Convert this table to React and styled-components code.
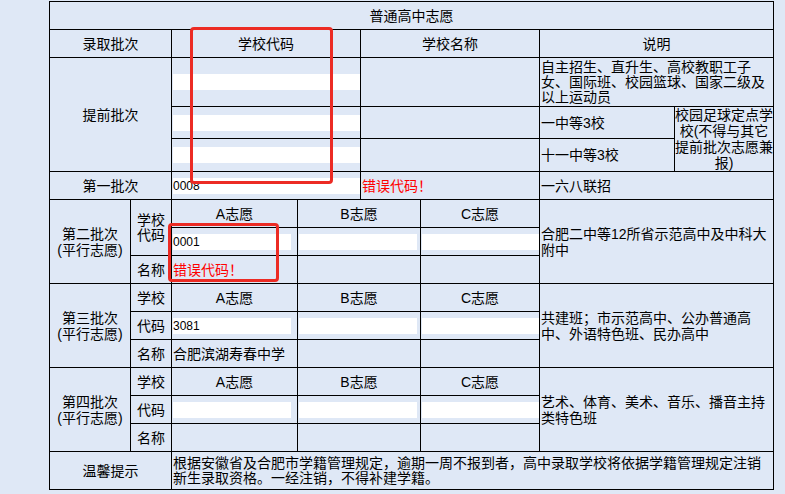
import React from 'react';
import styled, { createGlobalStyle } from 'styled-components';

const GlobalStyle = createGlobalStyle`
  html, body { margin: 0; padding: 0; background: #dfe8f6; }
  body {
    font-family: "Liberation Sans", "Noto Sans CJK SC", sans-serif;
    font-size: 14px;
    color: #000;
  }
`;

const Page = styled.div`
  padding: 1px 0 0 49px;
`;

const Board = styled.div`
  position: relative;
  width: 725px;
`;

const Grid = styled.div`
  display: grid;
  grid-template-columns: 80px 40px 125px 62px 59px 118px 134px 98px;
  grid-template-rows: 27px 27px 48px 31px 32px 27px repeat(9, 27px) 37px;
  gap: 1px;
  padding: 1px;
  background: #000;
  box-sizing: border-box;
  width: 725px;
`;

const Cell = styled.div`
  grid-column: ${(p) => p.$c};
  grid-row: ${(p) => p.$r};
  background: #dfe8f6;
  display: flex;
  align-items: center;
  justify-content: ${(p) => (p.$left ? 'flex-start' : 'center')};
  text-align: ${(p) => (p.$left ? 'left' : 'center')};
  padding-left: ${(p) => (p.$left ? '1px' : '0')};
  line-height: ${(p) => p.$lh || 16}px;
  color: ${(p) => (p.$error ? '#f00' : '#000')};
  min-width: 0;
  overflow: hidden;
`;

const Text = styled.span`
  display: block;
  white-space: nowrap;
`;

const Field = styled.input`
  display: block;
  width: ${(p) => p.$w || '100%'};
  height: 16px;
  margin: 0;
  padding: 0;
  border: 0;
  outline: none;
  background: #fff;
  font-family: "Liberation Sans", sans-serif;
  font-size: 12px;
  color: #000;
  box-sizing: border-box;
`;

const Highlight = styled.div`
  position: absolute;
  left: ${(p) => p.$x}px;
  top: ${(p) => p.$y}px;
  width: ${(p) => p.$w}px;
  height: ${(p) => p.$h}px;
  border: 3px solid #ec2b24;
  border-radius: 4px;
  box-sizing: border-box;
  pointer-events: none;
`;

const Lines = ({ lines }) => (
  <Text>
    {lines.map((l, i) => (
      <React.Fragment key={i}>
        {i > 0 && <br />}
        {l}
      </React.Fragment>
    ))}
  </Text>
);

const choiceCols = ['3', '4 / 6', '6'];
const choiceNames = ['A志愿', 'B志愿', 'C志愿'];

const batches = [
  {
    row: 7,
    label: ['第二批次', '(平行志愿)'],
    merged: true,
    codes: ['0001', '', ''],
    names: [{ text: '错误代码！', error: true }, null, null],
    desc: ['合肥二中等12所省示范高中及中科大', '附中'],
  },
  {
    row: 10,
    label: ['第三批次', '(平行志愿)'],
    merged: false,
    codes: ['3081', '', ''],
    names: [{ text: '合肥滨湖寿春中学' }, null, null],
    desc: ['共建班；市示范高中、公办普通高', '中、外语特色班、民办高中'],
  },
  {
    row: 13,
    label: ['第四批次', '(平行志愿)'],
    merged: false,
    codes: ['', '', ''],
    names: [null, null, null],
    desc: ['艺术、体育、美术、音乐、播音主持', '类特色班'],
  },
];

const Batch = ({ b }) => {
  const r = b.row;
  return (
    <>
      <Cell $c="1" $r={`${r} / ${r + 3}`}>
        <Lines lines={b.label} />
      </Cell>
      {b.merged ? (
        <Cell $c="2" $r={`${r} / ${r + 2}`} $lh={15}>
          <Lines lines={['学校', '代码']} />
        </Cell>
      ) : (
        <>
          <Cell $c="2" $r={`${r}`}>
            <Text>学校</Text>
          </Cell>
          <Cell $c="2" $r={`${r + 1}`}>
            <Text>代码</Text>
          </Cell>
        </>
      )}
      <Cell $c="2" $r={`${r + 2}`}>
        <Text>名称</Text>
      </Cell>
      {choiceCols.map((c, i) => (
        <React.Fragment key={c}>
          <Cell $c={c} $r={`${r}`}>
            <Text>{choiceNames[i]}</Text>
          </Cell>
          <Cell $c={c} $r={`${r + 1}`} $left>
            <Field $w="118px" defaultValue={b.codes[i]} />
          </Cell>
          <Cell $c={c} $r={`${r + 2}`} $left $error={b.names[i] && b.names[i].error}>
            {b.names[i] && <Text>{b.names[i].text}</Text>}
          </Cell>
        </React.Fragment>
      ))}
      <Cell $c="7 / 9" $r={`${r} / ${r + 3}`} $left>
        <Lines lines={b.desc} />
      </Cell>
    </>
  );
};

export default function App() {
  return (
    <>
      <GlobalStyle />
      <Page>
        <Board>
          <Grid>
            <Cell $c="1 / 9" $r="1">
              <Text>普通高中志愿</Text>
            </Cell>

            <Cell $c="1 / 3" $r="2"><Text>录取批次</Text></Cell>
            <Cell $c="3 / 5" $r="2"><Text>学校代码</Text></Cell>
            <Cell $c="5 / 7" $r="2"><Text>学校名称</Text></Cell>
            <Cell $c="7 / 9" $r="2"><Text>说明</Text></Cell>

            <Cell $c="1 / 3" $r="3 / 6"><Text>提前批次</Text></Cell>
            <Cell $c="3 / 5" $r="3" $left><Field defaultValue="" /></Cell>
            <Cell $c="5 / 7" $r="3" />
            <Cell $c="7 / 9" $r="3" $left $lh={15}>
              <Lines lines={['自主招生、直升生、高校教职工子', '女、国际班、校园篮球、国家二级及', '以上运动员']} />
            </Cell>
            <Cell $c="3 / 5" $r="4" $left><Field defaultValue="" /></Cell>
            <Cell $c="5 / 7" $r="4" />
            <Cell $c="7" $r="4" $left><Text>一中等3校</Text></Cell>
            <Cell $c="8" $r="4 / 6">
              <Lines lines={['校园足球定点学', '校(不得与其它', '提前批次志愿兼', '报)']} />
            </Cell>
            <Cell $c="3 / 5" $r="5" $left><Field defaultValue="" /></Cell>
            <Cell $c="5 / 7" $r="5" />
            <Cell $c="7" $r="5" $left><Text>十一中等3校</Text></Cell>

            <Cell $c="1 / 3" $r="6"><Text>第一批次</Text></Cell>
            <Cell $c="3 / 5" $r="6" $left><Field defaultValue="0008" /></Cell>
            <Cell $c="5 / 7" $r="6" $left $error><Text>错误代码！</Text></Cell>
            <Cell $c="7 / 9" $r="6" $left><Text>一六八联招</Text></Cell>

            {batches.map((b) => (
              <Batch key={b.row} b={b} />
            ))}

            <Cell $c="1 / 3" $r="16"><Text>温馨提示</Text></Cell>
            <Cell $c="3 / 9" $r="16" $left $lh={15}>
              <Lines
                lines={[
                  '根据安徽省及合肥市学籍管理规定，逾期一周不报到者，高中录取学校将依据学籍管理规定注销',
                  '新生录取资格。一经注销，不得补建学籍。',
                ]}
              />
            </Cell>
          </Grid>
          <Highlight $x={141} $y={26} $w={143} $h={157} />
          <Highlight $x={119} $y={222} $w={111} $h={59} />
        </Board>
      </Page>
    </>
  );
}
